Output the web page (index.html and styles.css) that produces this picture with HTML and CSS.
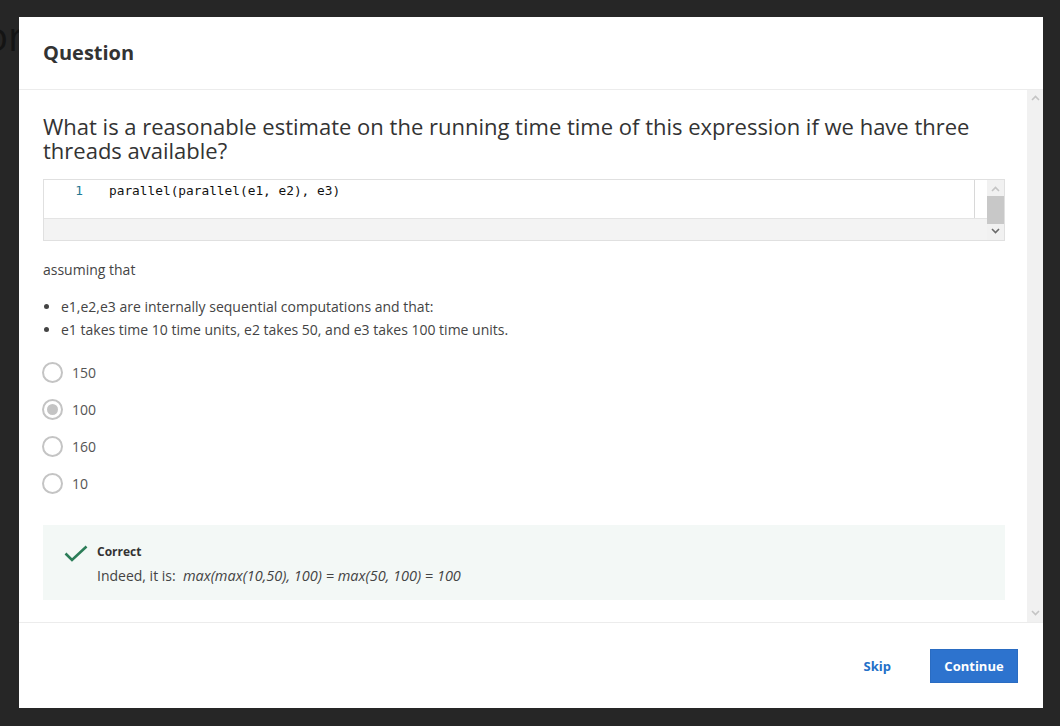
FILE: index.html
```html
<!DOCTYPE html>
<html>
<head>
<meta charset="utf-8">
<link rel="stylesheet" href="styles.css">
</head>
<body>
<div class="page-behind"><span class="behind-text">or</span></div>
<div class="backdrop">
  <div class="modal">
    <div class="modal-header"><h2 class="modal-title">Question</h2></div>
    <div class="modal-body">
      <div class="content">
        <p class="question">What is a reasonable estimate on the running time time of this expression if we have three threads available?</p>
        <div class="editor">
          <div class="editor-main">
            <div class="code-area">
              <div class="code-line"><span class="ln">1</span><span class="code">parallel(parallel(e1, e2), e3)</span></div>
              <div class="ruler"></div>
            </div>
            <div class="hscroll"></div>
          </div>
          <div class="vscroll">
            <span class="arrow up"><svg width="9" height="6" viewBox="0 0 9 6"><path d="M1 5 L4.5 1.5 L8 5" fill="none" stroke="#c4c4c4" stroke-width="1.6"/></svg></span>
            <span class="thumb"></span>
            <span class="arrow down"><svg width="9" height="6" viewBox="0 0 9 6"><path d="M1 1 L4.5 4.5 L8 1" fill="none" stroke="#6a6a6a" stroke-width="1.6"/></svg></span>
          </div>
        </div>
        <p class="text">assuming that</p>
        <ul class="bullets">
          <li>e1,e2,e3 are internally sequential computations and that:</li>
          <li>e1 takes time 10 time units, e2 takes 50, and e3 takes 100 time units.</li>
        </ul>
        <div class="options">
          <div class="option"><span class="radio"></span><span class="opt-label">150</span></div>
          <div class="option"><span class="radio checked"></span><span class="opt-label">100</span></div>
          <div class="option"><span class="radio"></span><span class="opt-label">160</span></div>
          <div class="option"><span class="radio"></span><span class="opt-label">10</span></div>
        </div>
        <div class="feedback">
          <svg class="check" width="24" height="18" viewBox="0 0 24 18"><path d="M1.5 8.5 L8 15 L22.5 1.5" fill="none" stroke="#2b7d58" stroke-width="2.6"/></svg>
          <div class="fb-text">
            <div class="fb-title">Correct</div>
            <div class="fb-body">Indeed, it is: &nbsp;<em>max(max(10,50), 100) = max(50, 100) = 100</em></div>
          </div>
        </div>
      </div>
      <div class="body-scroll">
        <span class="arrow"><svg width="9" height="6" viewBox="0 0 9 6"><path d="M1 5 L4.5 1.5 L8 5" fill="none" stroke="#c4c4c4" stroke-width="1.6"/></svg></span>
        <span class="arrow"><svg width="9" height="6" viewBox="0 0 9 6"><path d="M1 1 L4.5 4.5 L8 1" fill="none" stroke="#c4c4c4" stroke-width="1.6"/></svg></span>
      </div>
    </div>
    <div class="modal-footer">
      <button class="btn-skip">Skip</button>
      <button class="btn-continue">Continue</button>
    </div>
  </div>
</div>
</body>
</html>
```

FILE: styles.css
```css
* { box-sizing: border-box; }
html, body { margin: 0; padding: 0; }
body {
  width: 1060px;
  height: 726px;
  background: #262626;
  font-family: "Open Sans", "Liberation Sans", sans-serif;
  overflow: hidden;
  position: relative;
}
.page-behind {
  position: absolute;
  left: -16px;
  top: 12px;
}
.behind-text {
  font-size: 40px;
  color: #141414;
  line-height: 48px;
}
.backdrop {
  position: absolute;
  inset: 0;
  padding: 17px 17px 18px 19px;
}
.modal {
  width: 1024px;
  height: 691px;
  background: #fff;
  display: flex;
  flex-direction: column;
}
.modal-header {
  height: 73px;
  border-bottom: 1px solid #ececec;
  padding: 0 24px 2px;
  display: flex;
  align-items: center;
}
.modal-title {
  margin: 0;
  font-size: 20px;
  font-weight: 700;
  color: #333;
}
.modal-body {
  height: 533px;
  display: flex;
  border-bottom: 1px solid #ececec;
}
.content {
  flex: 1;
  padding: 24px 22px 0 24px;
}
.body-scroll {
  width: 16px;
  background: #f1f1f1;
  display: flex;
  flex-direction: column;
  justify-content: space-between;
  align-items: center;
  padding: 5px 0 6px;
}
.arrow { display: flex; }
.question {
  margin: 0;
  font-size: 22px;
  line-height: 24px;
  color: #333;
  padding-right: 30px;
}
.editor {
  margin-top: 17px;
  height: 62px;
  border: 1px solid #e0e0e0;
  display: flex;
}
.editor-main {
  flex: 1;
  display: flex;
  flex-direction: column;
}
.code-area {
  height: 39px;
  background: #fff;
  position: relative;
  border-bottom: 1px solid #e4e4e4;
}
.ruler {
  position: absolute;
  left: 930px;
  top: 0;
  bottom: 0;
  width: 1px;
  background: #d8d8d8;
}
.code-line {
  display: flex;
  height: 19px;
  align-items: center;
  margin-top: 1px;
  gap: 26px;
}
.ln {
  width: 39px;
  text-align: right;
  font-family: "DejaVu Sans Mono", "Liberation Mono", monospace;
  font-size: 12.8px;
  color: #237893;
}
.code {
  font-family: "DejaVu Sans Mono", "Liberation Mono", monospace;
  font-size: 12.8px;
  color: #111;
}
.hscroll {
  flex: 1;
  background: #f3f3f3;
}
.vscroll {
  width: 17px;
  background: #f1f1f1;
  display: flex;
  flex-direction: column;
  align-items: center;
  padding: 4px 0 4px;
}
.vscroll .arrow { height: 11px; align-items: center; }
.thumb {
  display: block;
  width: 17px;
  height: 31px;
  background: #c8c8c8;
  margin: 2px 0;
}
.vscroll .down { margin-top: auto; }
.text {
  margin: 19px 0 0;
  font-size: 14px;
  line-height: 19px;
  color: #444;
}
.bullets {
  margin: 16px 0 0;
  padding-left: 18px;
  font-size: 14px;
  line-height: 23px;
  color: #444;
}
.options {
  margin-top: 21px;
  display: flex;
  flex-direction: column;
  gap: 17px;
}
.option {
  display: flex;
  align-items: center;
  height: 20px;
  margin-left: -1px;
}
.radio {
  width: 21px;
  height: 21px;
  border: 2px solid #c4c4c4;
  border-radius: 50%;
  display: flex;
  align-items: center;
  justify-content: center;
  flex: none;
}
.radio.checked::after {
  content: "";
  width: 11px;
  height: 11px;
  border-radius: 50%;
  background: #c4c4c4;
}
.opt-label {
  margin-left: 9px;
  font-size: 14px;
  color: #555;
}
.feedback {
  margin-top: 32px;
  height: 75px;
  background: #f3f8f6;
  display: flex;
  padding: 19px 20px 0 21px;
}
.check { margin-top: 1px; flex: none; }
.fb-text { margin-left: 9px; }
.fb-title {
  font-size: 12px;
  font-weight: 700;
  color: #333;
  line-height: 16px;
}
.fb-body {
  margin-top: 6px;
  font-size: 14px;
  color: #444;
  line-height: 19px;
}
.fb-body em {
  font-size: 14.5px;
}
.modal-footer {
  flex: 1;
  display: flex;
  justify-content: flex-end;
  align-items: center;
  padding: 0 25px 0 0;
}
button {
  font-family: "Open Sans", "Liberation Sans", sans-serif;
  font-weight: 700;
  font-size: 13px;
  border: none;
  cursor: pointer;
}
.btn-skip {
  background: none;
  color: #2470c8;
  padding: 0;
  margin-right: 39px;
}
.btn-continue {
  width: 88px;
  height: 34px;
  background: #2d73ce;
  color: #fff;
  border: 1px solid #2a6cc2;
}
```
